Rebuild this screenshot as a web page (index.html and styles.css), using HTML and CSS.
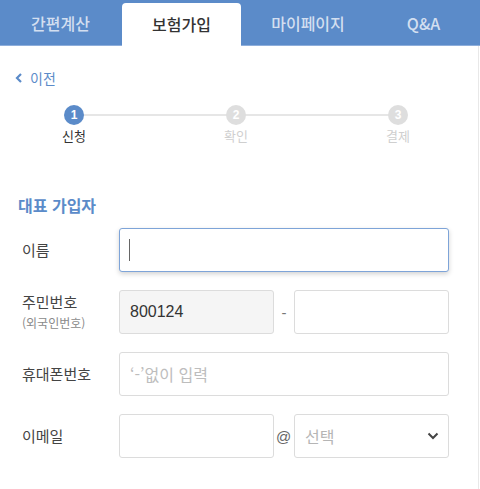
FILE: index.html
```html
<!DOCTYPE html>
<html lang="ko">
<head>
<meta charset="utf-8">
<link rel="stylesheet" href="styles.css">
</head>
<body>
<div class="page">
  <nav class="tabs">
    <div class="tab t1">간편계산</div>
    <div class="tab t2 active">보험가입</div>
    <div class="tab t3">마이페이지</div>
    <div class="tab t4">Q&amp;A</div>
  </nav>
  <main class="content">
    <a class="back" href="#">
      <svg class="back-ico" width="8" height="10" viewBox="0 0 8 10"><path d="M6 1 L2 5 L6 9" fill="none" stroke="#5b8bc9" stroke-width="2.2"/></svg>
      <span>이전</span>
    </a>
    <div class="stepper">
      <div class="step on"><span class="dot">1</span><span class="lbl">신청</span></div>
      <div class="step"><span class="dot">2</span><span class="lbl">확인</span></div>
      <div class="step"><span class="dot">3</span><span class="lbl">결제</span></div>
    </div>
    <h2 class="sec-title">대표 가입자</h2>
    <div class="form">
      <div class="row">
        <div class="label">이름</div>
        <div class="field focus"><input class="inp" type="text"><span class="caret"></span></div>
      </div>
      <div class="row">
        <div class="label">주민번호<small>(외국인번호)</small></div>
        <div class="split">
          <input class="inp ro" type="text" value="800124" readonly>
          <span class="sep">-</span>
          <input class="inp" type="text">
        </div>
      </div>
      <div class="row">
        <div class="label">휴대폰번호</div>
        <div class="field"><input class="inp" type="text" placeholder="‘-’없이 입력"></div>
      </div>
      <div class="row">
        <div class="label">이메일</div>
        <div class="split">
          <input class="inp" type="text">
          <span class="sep at">@</span>
          <div class="select">
            <span>선택</span>
            <svg width="12" height="8" viewBox="0 0 12 8"><path d="M1.5 1.5 L6 6 L10.5 1.5" fill="none" stroke="#444" stroke-width="2"/></svg>
          </div>
        </div>
      </div>
    </div>
  </main>
</div>
</body>
</html>
```

FILE: styles.css
```css
* { box-sizing: border-box; }
html, body { margin: 0; padding: 0; background: #fff; }
body {
  font-family: "Noto Sans CJK KR", "Noto Sans", "Liberation Sans", sans-serif;
  color: #333;
}
.page { width: 480px; height: 489px; overflow: hidden; }
.tabs {
  height: 46px;
  background: #5b8bc9;
  display: grid;
  grid-template-columns: 121px 120px 134px 97px 8px;
  align-items: end;
  border-bottom: 1px solid #8eaedb;
}
.tab {
  height: 42px;
  display: flex;
  align-items: center;
  justify-content: center;
  font-size: 16px;
  font-weight: 500;
  color: #d3dff0;
  padding-bottom: 2px;
}
.tab.active {
  background: #fff;
  color: #333;
  border-radius: 4px 4px 0 0;
  margin-left: 1px;
  height: 43px;
  margin-bottom: -1px;
}
.content {
  width: 479px;
  height: 443px;
  border-right: 1px solid #e8e8e8;
  padding-top: 22px;
}
.back {
  display: flex;
  align-items: center;
  gap: 7px;
  margin-left: 15px;
  color: #5b8bc9;
  font-size: 14px;
  text-decoration: none;
  height: 20px;
  width: 60px;
}
.back-ico { display: block; }
.stepper {
  position: relative;
  display: flex;
  justify-content: space-between;
  margin: 17px 0 0 54px;
  width: 364px;
}
.stepper::before {
  content: "";
  position: absolute;
  left: 20px;
  right: 20px;
  top: 9px;
  height: 2px;
  background: #e6e6e6;
}
.step {
  position: relative;
  width: 40px;
  display: flex;
  flex-direction: column;
  align-items: center;
}
.dot {
  width: 20px;
  height: 20px;
  border-radius: 50%;
  background: #dedede;
  color: #fff;
  font-size: 12px;
  font-weight: 700;
  display: flex;
  align-items: center;
  justify-content: center;
  font-family: "Liberation Sans", sans-serif;
}
.step.on .dot { background: #5b8bc9; }
.lbl {
  margin-top: 1px;
  font-size: 13px;
  line-height: 20px;
  color: #cfcfcf;
}
.step.on .lbl { color: #333; }
.sec-title {
  margin: 47px 0 0 18px;
  font-size: 16px;
  font-weight: 700;
  color: #5b8bc9;
  line-height: 24px;
}
.form {
  margin-top: 11px;
  padding-left: 22px;
  display: flex;
  flex-direction: column;
  gap: 18px;
}
.row {
  display: grid;
  grid-template-columns: 97px 330px;
  align-items: center;
  min-height: 44px;
}
.label {
  font-size: 15px;
  color: #444;
  line-height: 22px;
}
.label small {
  display: block;
  font-size: 12px;
  color: #8a8a8a;
  line-height: 20px;
}
.field { position: relative; }
.inp {
  display: block;
  width: 100%;
  height: 44px;
  border: 1px solid #dcdcdc;
  border-radius: 3px;
  background: #fff;
  padding: 0 10px;
  font-family: "Noto Sans CJK KR", "Liberation Sans", sans-serif;
  font-size: 16px;
  color: #333;
  outline: none;
}
.inp::placeholder { color: #bdbdbd; }
.inp.ro { background: #f5f5f5; font-family: "Liberation Sans", sans-serif; }
.field.focus .inp {
  border-color: #7ea4d8;
  box-shadow: 0 2px 5px rgba(0, 0, 0, 0.18);
}
.caret {
  position: absolute;
  left: 10px;
  top: 11px;
  width: 1px;
  height: 22px;
  background: #666;
}
.split {
  display: grid;
  grid-template-columns: 155px 20px 155px;
  align-items: center;
}
.sep {
  text-align: center;
  color: #777;
  font-size: 15px;
  font-family: "Liberation Sans", sans-serif;
}
.sep.at { font-size: 15px; color: #666; text-align: left; padding-left: 2px; }
.select {
  height: 44px;
  border: 1px solid #dcdcdc;
  border-radius: 3px;
  display: flex;
  align-items: center;
  justify-content: space-between;
  padding: 0 9px 0 10px;
  font-size: 16px;
  color: #b5b5b5;
}
.select svg { display: block; }
```
